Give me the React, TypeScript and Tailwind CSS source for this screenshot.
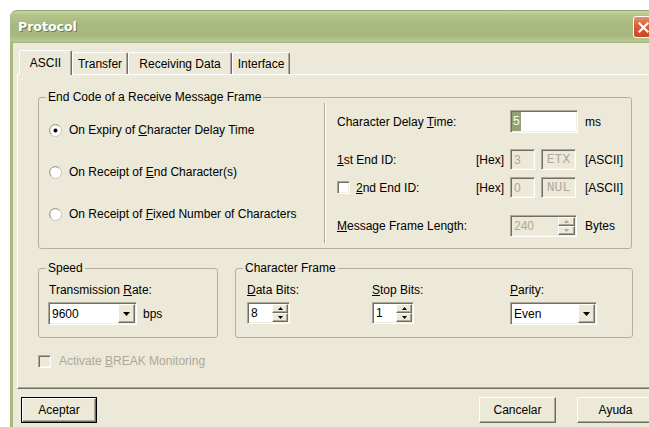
import React from "react";

// Classic 3D edge styles
const raised =
  "border border-t-white border-l-white border-r-[#716f64] border-b-[#716f64] shadow-[inset_-1px_-1px_#aca899]";
const sunken =
  "border border-t-[#aca899] border-l-[#aca899] border-r-white border-b-white shadow-[inset_1px_1px_#716f64,inset_-1px_-1px_#f1efe2]";

function Radio({ checked }: { checked?: boolean }) {
  return (
    <svg width="13" height="13" viewBox="0 0 13 13" className="shrink-0">
      <circle cx="6.5" cy="6.5" r="6" fill="#fff" stroke="#c8c5b5" />
      <path d="M2.3 10.2 A5.2 5.2 0 0 1 10.2 2.3" stroke="#9c9988" strokeWidth="1" fill="none" />
      {checked && <circle cx="6.5" cy="6.5" r="2" fill="#000" />}
    </svg>
  );
}

function Check({ disabled }: { disabled?: boolean }) {
  return (
    <span
      className={`${sunken} block h-[13px] w-[13px] shrink-0 ${disabled ? "bg-[#ece9d8]" : "bg-white"}`}
    />
  );
}

function Arrow({ dir, disabled }: { dir: "up" | "down"; disabled?: boolean }) {
  const fill = disabled ? "#aca899" : "#000";
  return (
    <svg width="5" height="3" viewBox="0 0 5 3">
      {dir === "up" ? <polygon points="2.5,0 5,3 0,3" fill={fill} /> : <polygon points="0,0 5,0 2.5,3" fill={fill} />}
    </svg>
  );
}

function SpinButtons({ disabled, width }: { disabled?: boolean; width: string }) {
  return (
    <div className={`flex h-full flex-col ${width}`}>
      <div className={`${raised} flex flex-1 items-center justify-center bg-[#ece9d8]`}>
        <Arrow dir="up" disabled={disabled} />
      </div>
      <div className={`${raised} flex flex-1 items-center justify-center bg-[#ece9d8]`}>
        <Arrow dir="down" disabled={disabled} />
      </div>
    </div>
  );
}

function DropButton() {
  return (
    <div className={`${raised} flex h-full w-[17px] items-center justify-center bg-[#ece9d8]`}>
      <svg width="7" height="4" viewBox="0 0 7 4">
        <polygon points="0,0 7,0 3.5,4" fill="#000" />
      </svg>
    </div>
  );
}

function Tab({ label, width, active }: { label: string; width: string; active?: boolean }) {
  return (
    <div
      className={`flex items-start justify-center rounded-t-[2px] border-l border-t border-l-white border-t-white border-r border-r-[#716f64] shadow-[inset_-1px_0_#aca899] ${width} ${
        active ? "relative z-10 mb-[-1px] h-[25px] bg-[#ece9d8] pt-[5px]" : "h-[22px] pt-[4px]"
      }`}
    >
      <span className="leading-[14px]">{label}</span>
    </div>
  );
}

function Button({ label, isDefault, width }: { label: string; isDefault?: boolean; width: string }) {
  const face = (
    <div className={`${raised} flex h-full w-full items-center justify-center bg-[#ece9d8]`}>
      <span className="leading-[14px]">{label}</span>
    </div>
  );
  if (isDefault) {
    return <div className={`h-[26px] border border-black ${width}`}>{face}</div>;
  }
  return <div className={`h-[26px] ${width}`}>{face}</div>;
}

export default function App() {
  return (
    <div className="h-[427px] w-[649px] overflow-hidden bg-white pl-[10px] pt-[10px] font-['Liberation_Sans',Arial,sans-serif] text-[12px] text-black">
      <div className="w-[660px]">
        {/* Title bar */}
        <div className="flex h-[33px] items-center justify-between rounded-t-[7px] border-t border-[#8fa46c] bg-[linear-gradient(to_bottom,#c9d6a5_0%,#b4c48b_12%,#a8b87f_45%,#a6b67d_75%,#b9c891_94%,#a0b178_100%)] pl-[8px] pr-[16px]">
          <span className="font-['DejaVu_Sans',sans-serif] text-[12.5px] font-bold leading-[16px] text-white [text-shadow:1px_1px_#6f7f4e]">
            Protocol
          </span>
          <div className="flex h-[22px] w-[21px] items-center justify-center rounded-[3px] border border-white bg-[linear-gradient(to_bottom,#e9906e_0%,#d8603b_40%,#c44b27_100%)]">
            <svg width="11" height="11" viewBox="0 0 11 11">
              <path d="M1.5 1.5 L9.5 9.5 M9.5 1.5 L1.5 9.5" stroke="#fff" strokeWidth="2.2" strokeLinecap="square" />
            </svg>
          </div>
        </div>

        {/* Window body */}
        <div className="flex flex-col border-x-[3px] border-[#a8b980] bg-[#ece9d8] pt-[7px]">
          {/* Tab strip */}
          <div className="flex items-end pl-[6px]">
            <Tab label="ASCII" width="w-[53px]" active />
            <Tab label="Transfer" width="w-[56px]" />
            <Tab label="Receiving Data" width="w-[104px]" />
            <Tab label="Interface" width="w-[58px]" />
          </div>

          {/* Tab page */}
          <div className={`ml-[4px] h-[315px] w-[636px] ${raised} flex flex-col pl-[20px]`}>
            {/* End code group */}
            <fieldset className="mt-[15px] h-[159px] w-[594px] rounded-[3px] border border-[#b3b09f]">
              <legend className="ml-[7px] px-[2px] leading-[14px]">End Code of a Receive Message Frame</legend>
              <div className="flex h-[144px]">
                <div className="flex w-[285px] flex-col gap-[28px] pl-[10px] pt-[19px]">
                  <label className="flex h-[14px] items-center gap-[7px] leading-[14px]">
                    <Radio checked />
                    <span>
                      On Expiry of <u>C</u>haracter Delay Time
                    </span>
                  </label>
                  <label className="flex h-[14px] items-center gap-[7px] leading-[14px]">
                    <Radio />
                    <span>
                      On Receipt of <u>E</u>nd Character(s)
                    </span>
                  </label>
                  <label className="flex h-[14px] items-center gap-[7px] leading-[14px]">
                    <Radio />
                    <span>
                      On Receipt of <u>F</u>ixed Number of Characters
                    </span>
                  </label>
                </div>

                <div className="mt-[-1px] h-[140px] w-[2px] border-l border-r border-l-[#aca899] border-r-white" />

                <div className="flex flex-col pl-[11px]">
                  <div className="mt-[6px] flex h-[23px] items-center">
                    <span className="w-[173px] leading-[14px]">
                      Character Delay <u>T</u>ime:
                    </span>
                    <div className={`${sunken} flex h-[23px] w-[68px] items-center bg-white pl-[1px]`}>
                      <span className="bg-[#93a070] px-[1px] leading-[19px] text-white">5</span>
                    </div>
                    <span className="ml-[7px] leading-[14px]">ms</span>
                  </div>

                  <div className="mt-[16px] flex h-[21px] items-center">
                    <span className="w-[139px] leading-[14px]">
                      <u>1</u>st End ID:
                    </span>
                    <span className="w-[34px] leading-[14px]">[Hex]</span>
                    <div className={`${sunken} flex h-[21px] w-[25px] items-center bg-[#ece9d8] pl-[3px] text-[#aca899]`}>3</div>
                    <div className={`${sunken} ml-[6px] flex h-[21px] w-[35px] items-center justify-center bg-[#ece9d8] font-['Liberation_Mono',monospace] text-[13px] text-[#aca899]`}>
                      ETX
                    </div>
                    <span className="ml-[9px] leading-[14px]">[ASCII]</span>
                  </div>

                  <div className="mt-[7px] flex h-[21px] items-center">
                    <div className="flex w-[139px] items-center gap-[6px]">
                      <Check />
                      <span className="leading-[14px]">
                        <u>2</u>nd End ID:
                      </span>
                    </div>
                    <span className="w-[34px] leading-[14px]">[Hex]</span>
                    <div className={`${sunken} flex h-[21px] w-[25px] items-center bg-[#ece9d8] pl-[3px] text-[#aca899]`}>0</div>
                    <div className={`${sunken} ml-[6px] flex h-[21px] w-[35px] items-center justify-center bg-[#ece9d8] font-['Liberation_Mono',monospace] text-[13px] text-[#aca899]`}>
                      NUL
                    </div>
                    <span className="ml-[9px] leading-[14px]">[ASCII]</span>
                  </div>

                  <div className="mt-[17px] flex h-[22px] items-center">
                    <span className="w-[173px] leading-[14px]">
                      <u>M</u>essage Frame Length:
                    </span>
                    <div className={`${sunken} flex h-[22px] w-[67px] items-center justify-between bg-[#ece9d8] py-[1px] pl-[3px] pr-[1px] text-[#aca899]`}>
                      <span>240</span>
                      <SpinButtons disabled width="w-[17px]" />
                    </div>
                    <span className="ml-[8px] leading-[14px]">Bytes</span>
                  </div>
                </div>
              </div>
            </fieldset>

            {/* Speed + character frame */}
            <div className="mt-[12px] flex gap-[17px]">
              <fieldset className="h-[77px] w-[180px] rounded-[3px] border border-[#b3b09f]">
                <legend className="ml-[7px] px-[2px] leading-[14px]">Speed</legend>
                <div className="flex flex-col pl-[9px] pt-[8px]">
                  <span className="pl-[1px] leading-[14px]">
                    Transmission <u>R</u>ate:
                  </span>
                  <div className="mt-[5px] flex items-center">
                    <div className={`${sunken} flex h-[23px] w-[89px] items-center justify-between bg-white py-[1px] pl-[3px] pr-[1px]`}>
                      <span>9600</span>
                      <DropButton />
                    </div>
                    <span className="ml-[6px] leading-[14px]">bps</span>
                  </div>
                </div>
              </fieldset>

              <fieldset className="h-[77px] w-[398px] rounded-[3px] border border-[#b3b09f]">
                <legend className="ml-[7px] px-[2px] leading-[14px]">Character Frame</legend>
                <div className="flex pl-[11px] pt-[8px]">
                  <div className="flex w-[125px] flex-col">
                    <span className="leading-[14px]">
                      <u>D</u>ata Bits:
                    </span>
                    <div className={`${sunken} mt-[5px] flex h-[22px] w-[43px] items-center justify-between bg-white py-[1px] pl-[3px] pr-[1px]`}>
                      <span>8</span>
                      <SpinButtons width="w-[16px]" />
                    </div>
                  </div>
                  <div className="flex w-[138px] flex-col">
                    <span className="leading-[14px]">
                      <u>S</u>top Bits:
                    </span>
                    <div className={`${sunken} mt-[5px] flex h-[22px] w-[42px] items-center justify-between bg-white py-[1px] pl-[3px] pr-[1px]`}>
                      <span>1</span>
                      <SpinButtons width="w-[16px]" />
                    </div>
                  </div>
                  <div className="flex flex-col">
                    <span className="leading-[14px]">
                      <u>P</u>arity:
                    </span>
                    <div className={`${sunken} mt-[5px] flex h-[23px] w-[87px] items-center justify-between bg-white py-[1px] pl-[3px] pr-[1px]`}>
                      <span>Even</span>
                      <DropButton />
                    </div>
                  </div>
                </div>
              </fieldset>
            </div>

            {/* Break monitoring option */}
            <div className="mt-[16px] flex items-center gap-[8px] text-[#aca899]">
              <Check disabled />
              <span className="leading-[14px]">
                Activate <u>B</u>REAK Monitoring
              </span>
            </div>
          </div>

          {/* Dialog buttons */}
          <div className="mt-[8px] flex pb-[10px] pl-[8px] pr-[13px]">
            <Button label="Aceptar" isDefault width="w-[76px]" />
            <div className="flex-1" />
            <Button label="Cancelar" width="w-[77px]" />
            <div className="w-[21px]" />
            <Button label="Ayuda" width="w-[77px]" />
          </div>
        </div>
      </div>
    </div>
  );
}
